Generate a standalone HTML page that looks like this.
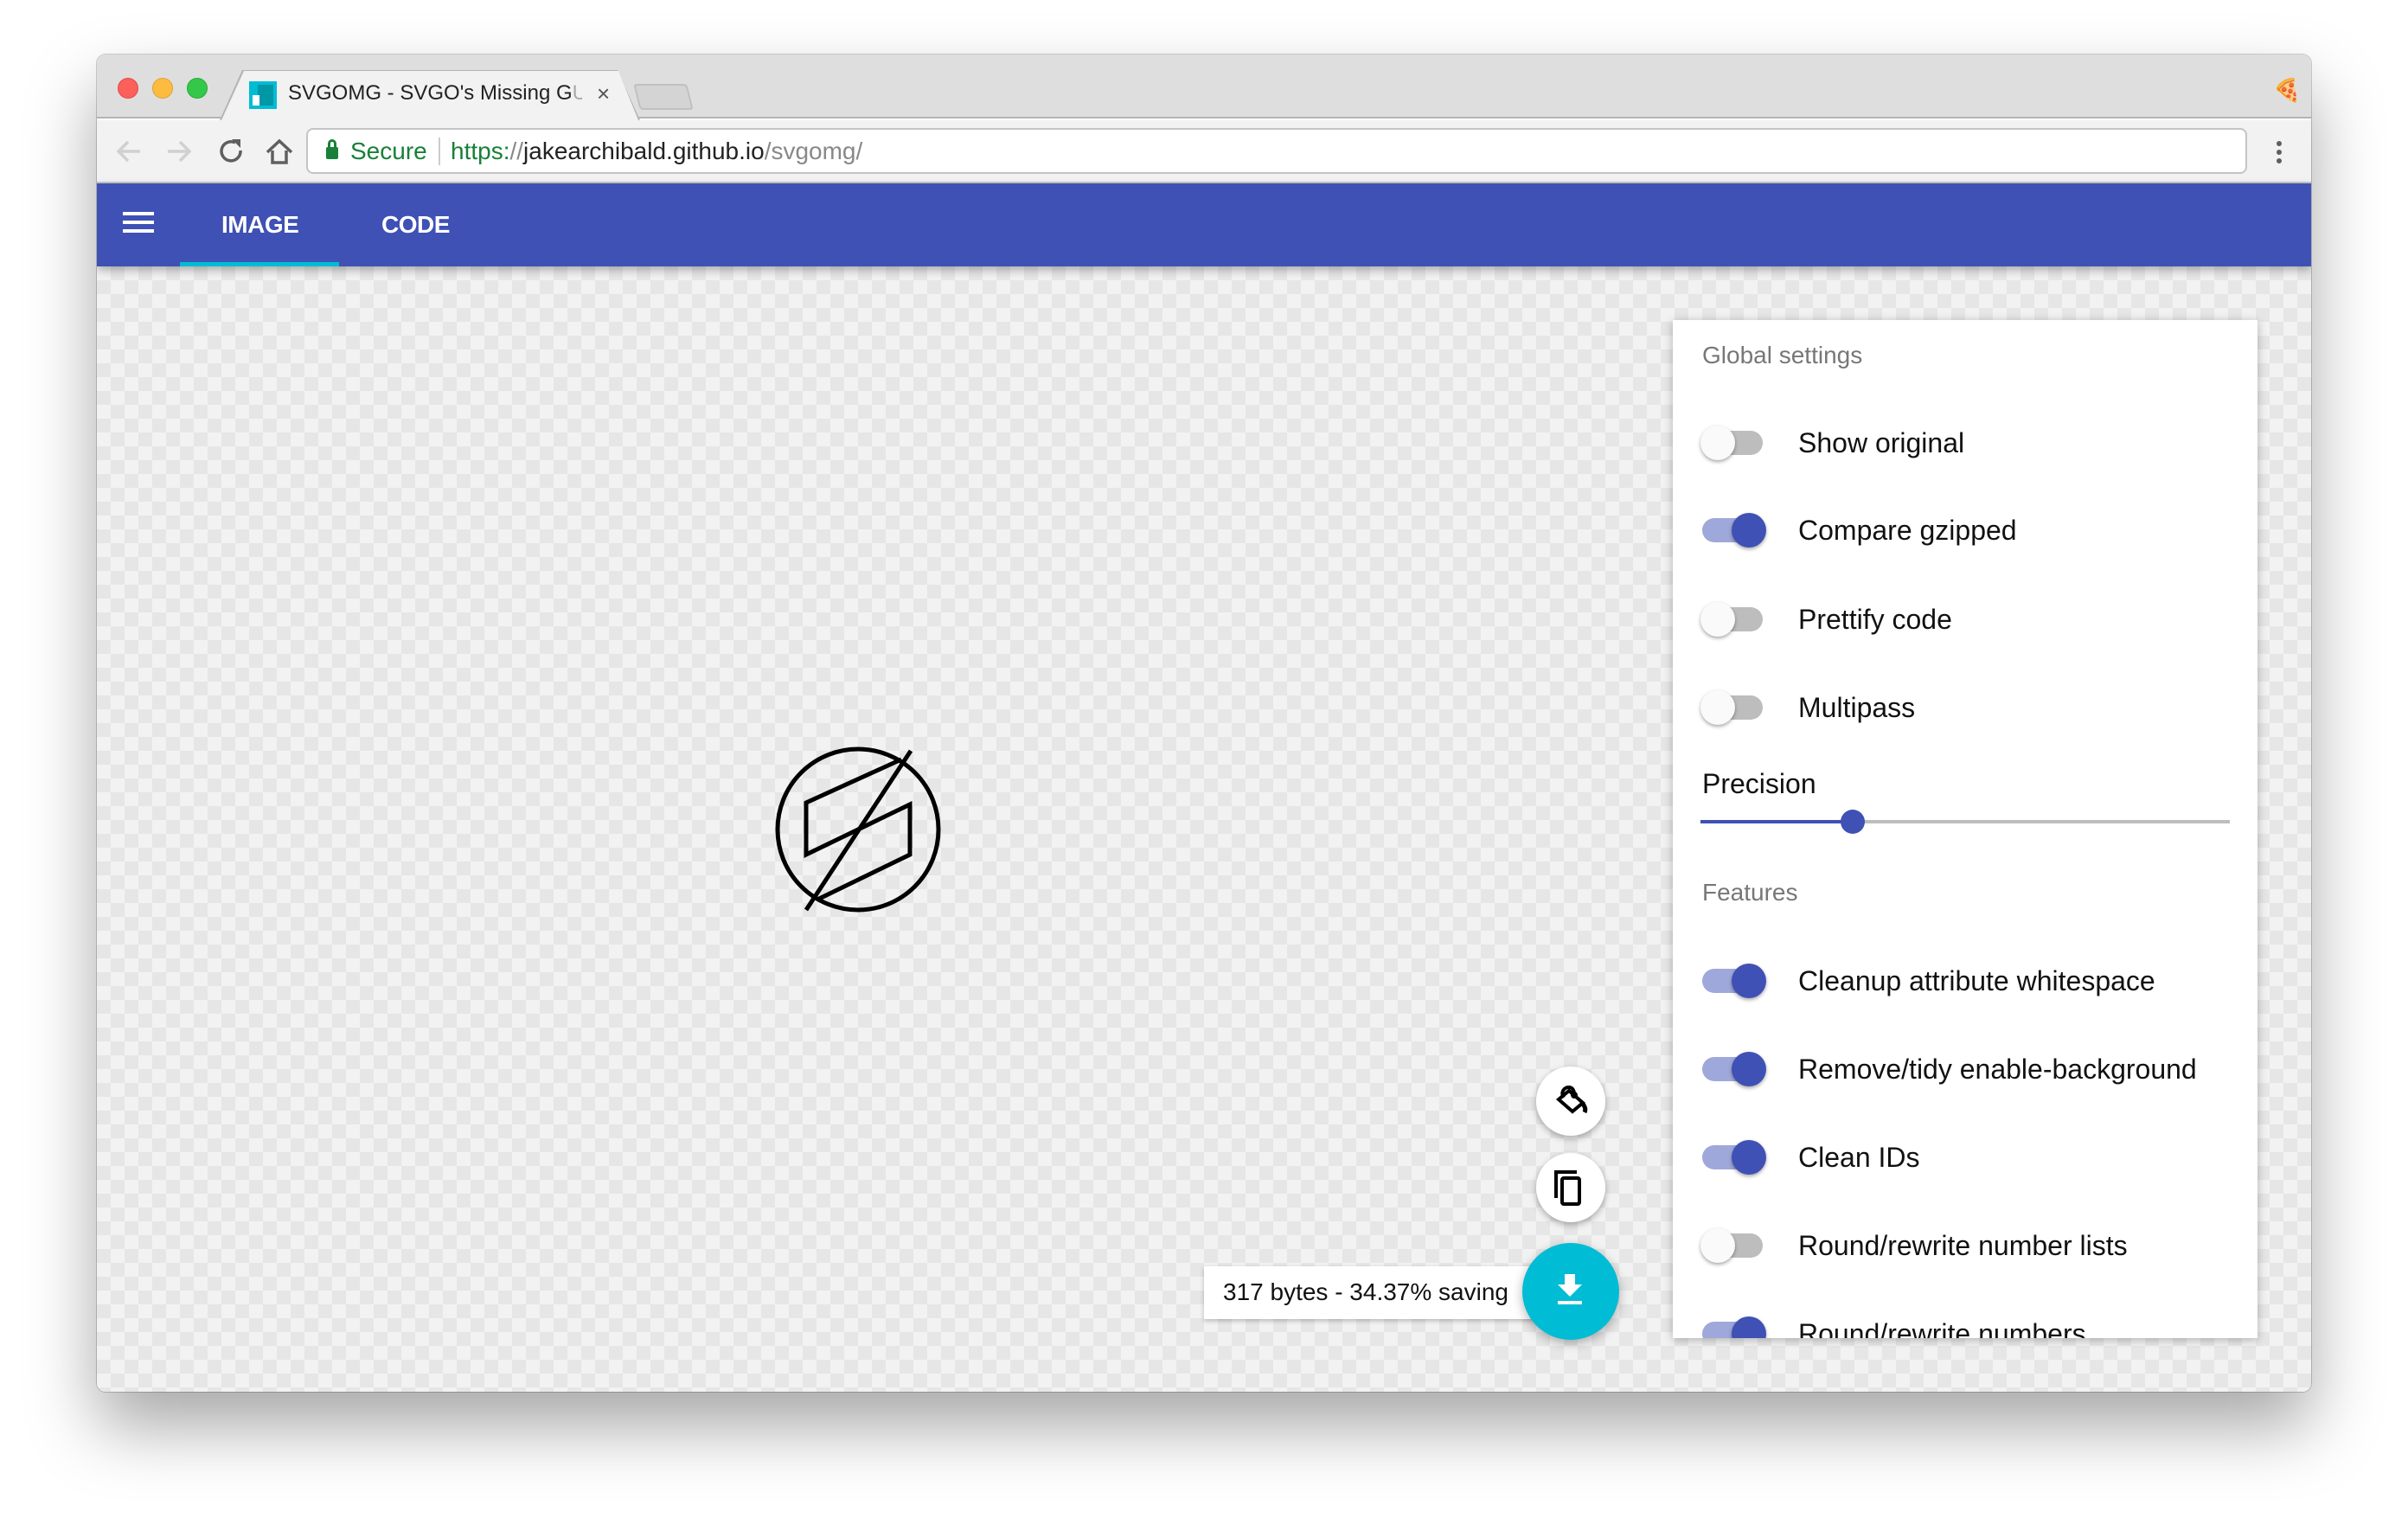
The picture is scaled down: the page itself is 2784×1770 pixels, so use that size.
<!DOCTYPE html>
<html><head><meta charset="utf-8"><style>
*{margin:0;padding:0;box-sizing:border-box}
body{width:2784px;height:1770px;background:#fff;position:relative;overflow:hidden;font-family:"Liberation Sans",sans-serif}
.win{position:absolute;left:112px;top:63px;width:2560px;height:1546px;border-radius:10px;overflow:hidden;box-shadow:0 40px 80px rgba(0,0,0,.35),0 0 0 1px rgba(0,0,0,.18)}
.tabbar{position:absolute;left:0;top:0;width:100%;height:74px;background:#dedede;border-bottom:2px solid #b4b4b4}
.light{position:absolute;top:27px;width:24px;height:24px;border-radius:50%}
.tab{position:absolute;left:144px;top:19px;width:482px;height:57px;background:#f2f2f2;clip-path:polygon(0 100%,26px 0,459px 0,100% 100%);}
.tabb{position:absolute;left:142px;top:18px;width:486px;height:58px;background:#b4b4b4;clip-path:polygon(0 100%,26px 0,460px 0,100% 100%);}
.toolbar{position:absolute;left:0;top:76px;width:100%;height:73px;background:#f2f2f2;border-bottom:2px solid #c8c8c8}
.url{position:absolute;left:242px;top:9px;width:2244px;height:53px;background:#fff;border:2px solid #c4c4c4;border-radius:8px}
.app{position:absolute;left:0;top:149px;width:100%;height:96px;background:#3f51b5;box-shadow:0 4px 10px rgba(0,0,0,.3);z-index:2}
.main{position:absolute;left:0;top:245px;width:100%;height:1301px;background-color:#f2f2f2;
background-image:linear-gradient(45deg,#e6e6e6 25%,transparent 25%,transparent 75%,#e6e6e6 75%),linear-gradient(45deg,#e6e6e6 25%,transparent 25%,transparent 75%,#e6e6e6 75%);background-size:32px 32px;background-position:0 0,16px 16px}
.panel{position:absolute;left:1822px;top:62px;width:676px;height:1177px;background:#fff;box-shadow:0 2px 10px rgba(0,0,0,.28);overflow:hidden}
.h{position:absolute;left:34px;font-size:28px;color:#777}
.row{position:absolute;left:34px;height:40px;width:620px}
.row .tr{position:absolute;left:0;top:6px;width:70px;height:28px;border-radius:14px;background:#bdbdbd}
.row .th{position:absolute;left:-2px;top:0;width:40px;height:40px;border-radius:50%;background:#fafafa;box-shadow:0 2px 4px rgba(0,0,0,.35)}
.row.on .tr{background:#9fa8da}.row.on .th{left:34px;background:#3f51b5}
.row span{position:absolute;left:111px;top:2px;font-size:32px;color:#111;white-space:nowrap}
.fab{position:absolute;border-radius:50%;background:#fff;box-shadow:0 3px 8px rgba(0,0,0,.3)}
</style></head><body>
<div class="win">
 <div class="tabbar">
  <div class="light" style="left:24px;background:#fc605b;border:1px solid #de4a45"></div>
  <div class="light" style="left:64px;background:#fdbc40;border:1px solid #dea235"></div>
  <div class="light" style="left:104px;background:#34c84a;border:1px solid #27aa35"></div>
  <div class="tabb"></div><div class="tab"></div>
  <div style="position:absolute;left:176px;top:31px;width:32px;height:32px;background:#00bcd4"><div style="position:absolute;left:10px;top:4px;width:18px;height:24px;background:#0097a7"></div><div style="position:absolute;left:4px;top:16px;width:8px;height:12px;background:#fff"></div></div>
  <div style="position:absolute;left:221px;top:31px;font-size:24px;color:#222;white-space:nowrap;width:340px;overflow:hidden">SVGOMG - SVGO's Missing G<span style="color:#aaa">UI</span></div>
  <div style="position:absolute;left:578px;top:30px;font-size:26px;color:#555">×</div>
  <div style="position:absolute;left:624px;top:34px;width:62px;height:30px;background:#d4d4d4;border:2px solid #c0c0c0;border-radius:4px;transform:skewX(14deg)"></div>
  <div style="position:absolute;left:2516px;top:26px;font-size:26px">🍕</div>
 </div>
 <div class="toolbar">
  <svg style="position:absolute;left:20px;top:16px" width="240" height="40" viewBox="0 0 240 40" fill="none" stroke-width="3.5">
   <path d="M30 20H6M16 9L5 20l11 11" stroke="#d0d0d0"/>
   <path d="M62 20h24M76 9l11 11-11 11" stroke="#d0d0d0"/>
   <path d="M140 10a11 11 0 1 0 6 9" stroke="#5f5f5f"/><path d="M136 6l10 0 0 10z" fill="#5f5f5f" stroke="none"/>
   <path d="M183 19v14h16V19M177 21l14-13 14 13" stroke="#5f5f5f"/>
  </svg>
  <div class="url">
   <div style="position:absolute;left:21px;top:20px;width:14px;height:14px;background:#188038;border-radius:2px"></div>
   <div style="position:absolute;left:23px;top:11px;width:10px;height:12px;border:3px solid #188038;border-radius:6px 6px 0 0"></div>
   <div style="position:absolute;left:49px;top:9px;font-size:28px;color:#188038">Secure</div>
   <div style="position:absolute;left:151px;top:9px;width:2px;height:32px;background:#ccc"></div>
   <div style="position:absolute;left:165px;top:9px;font-size:28px;color:#222;white-space:nowrap"><span style="color:#188038">https:</span><span style="color:#888">//</span>jakearchibald.github.io<span style="color:#888">/svgomg/</span></div>
  </div>
  <div style="position:absolute;left:2520px;top:24px;width:6px;height:6px;border-radius:50%;background:#5f5f5f;box-shadow:0 10px 0 #5f5f5f,0 20px 0 #5f5f5f"></div>
 </div>
 <div class="app">
  <div style="position:absolute;left:30px;top:33px;width:36px;height:4px;background:#fff;box-shadow:0 10px 0 #fff,0 20px 0 #fff"></div>
  <div style="position:absolute;left:144px;top:32px;font-size:28px;color:#fff;font-weight:bold;letter-spacing:-0.5px">IMAGE</div>
  <div style="position:absolute;left:329px;top:32px;font-size:28px;color:#fff;font-weight:bold;letter-spacing:-0.5px">CODE</div>
  <div style="position:absolute;left:96px;top:91px;width:184px;height:5px;background:#00bcd4"></div>
 </div>
 <div class="main">
  <svg style="position:absolute;left:748px;top:532px" width="240" height="240" viewBox="0 0 240 240" fill="none" stroke="#000" stroke-width="5">
   <circle cx="132" cy="119" r="93"/>
   <path d="M182 38L72 88v60l120-58v58L85 200"/>
   <path d="M193 28L72 212" stroke-width="5"/>
  </svg>
  <div style="position:absolute;left:1280px;top:1156px;width:434px;height:61px;background:#fff;box-shadow:0 2px 5px rgba(0,0,0,.25)"><div style="position:absolute;left:22px;top:14px;font-size:28px;color:#111;white-space:nowrap">317 bytes - 34.37% saving</div></div>
  <div class="fab" style="left:1664px;top:925px;width:80px;height:80px">
   <svg style="position:absolute;left:18px;top:18px" width="44" height="44" viewBox="0 0 44 44" fill="none" stroke="#000" stroke-width="4"><path d="M8 20l12-10 16 14-12 10z"/><path d="M14 18c-4-6 0-12 6-12 4 0 6 4 6 8"/><circle cx="26" cy="15" r="2" fill="#000"/><path d="M34 23c4 4 6 8 4 12" stroke-width="5"/></svg>
  </div>
  <div class="fab" style="left:1664px;top:1025px;width:80px;height:80px">
   <svg style="position:absolute;left:20px;top:19px" width="40" height="44" viewBox="0 0 40 44" fill="none" stroke="#000" stroke-width="4"><path d="M3 33V3h24"/><rect x="10" y="10" width="20" height="30" rx="2"/></svg>
  </div>
  <div class="fab" style="left:1648px;top:1129px;width:112px;height:112px;background:#00bcd4;box-shadow:0 4px 12px rgba(0,0,0,.3)">
   <svg style="position:absolute;left:38px;top:36px" width="36" height="40" viewBox="0 0 36 40" fill="#fff"><path d="M11 0h12v12h8L17 26 3 12h8z"/><rect x="3" y="31" width="28" height="4"/></svg>
  </div>
  <div class="panel">
   <div class="h" style="top:25px">Global settings</div>
   <div class="row" style="top:122px"><div class="tr"></div><div class="th"></div><span>Show original</span></div>
   <div class="row on" style="top:223px"><div class="tr"></div><div class="th"></div><span>Compare gzipped</span></div>
   <div class="row" style="top:326px"><div class="tr"></div><div class="th"></div><span>Prettify code</span></div>
   <div class="row" style="top:428px"><div class="tr"></div><div class="th"></div><span>Multipass</span></div>
   <div style="position:absolute;left:34px;top:518px;font-size:32px;color:#111">Precision</div>
   <div style="position:absolute;left:32px;top:578px;width:612px;height:4px;background:#bdbdbd"></div>
   <div style="position:absolute;left:32px;top:578px;width:176px;height:4px;background:#3f51b5"></div>
   <div style="position:absolute;left:194px;top:566px;width:28px;height:28px;border-radius:50%;background:#3f51b5"></div>
   <div class="h" style="top:646px">Features</div>
   <div class="row on" style="top:744px"><div class="tr"></div><div class="th"></div><span>Cleanup attribute whitespace</span></div>
   <div class="row on" style="top:846px"><div class="tr"></div><div class="th"></div><span>Remove/tidy enable-background</span></div>
   <div class="row on" style="top:948px"><div class="tr"></div><div class="th"></div><span>Clean IDs</span></div>
   <div class="row" style="top:1050px"><div class="tr"></div><div class="th"></div><span>Round/rewrite number lists</span></div>
   <div class="row on" style="top:1152px"><div class="tr"></div><div class="th"></div><span>Round/rewrite numbers</span></div>
  </div>
 </div>
</div>
</body></html>
